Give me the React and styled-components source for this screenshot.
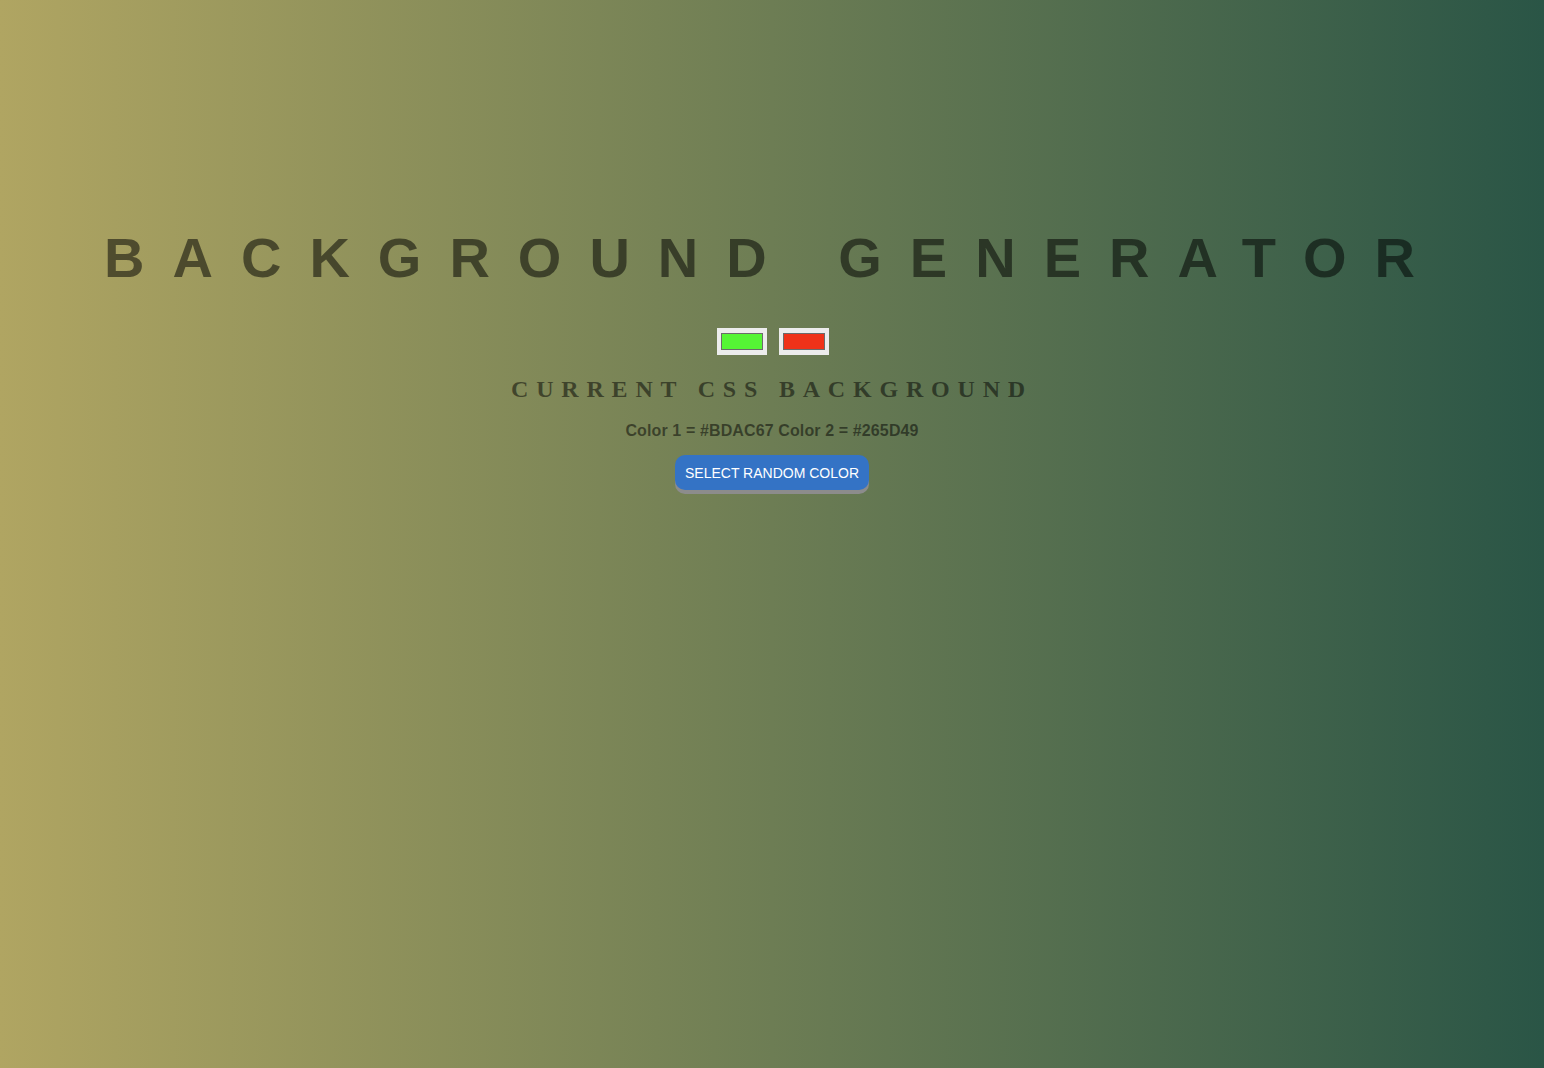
import React, { useState } from "react";
import styled, { createGlobalStyle } from "styled-components";

const GlobalStyle = createGlobalStyle`
  html,
  body {
    margin: 0;
    min-height: 100%;
  }

  body {
    min-height: 100vh;
    background: linear-gradient(to right, #b0a562, #2a5546);
    color: rgba(0, 0, 0, 0.5);
    text-align: center;
  }
`;

const Page = styled.div`
  display: flex;
  flex-direction: column;
  align-items: center;
  padding-top: 226px;
`;

const Title = styled.h1`
  margin: 0;
  padding-left: 3px;
  font: 700 56px/64px "Liberation Sans", Arial, sans-serif;
  letter-spacing: 0.5em;
  text-transform: uppercase;
  color: rgba(0, 0, 0, 0.52);
`;

const Pickers = styled.div`
  display: flex;
  gap: 12px;
  margin-top: 38px;
  padding-left: 2px;
`;

const ColorInput = styled.input`
  width: 50px;
  height: 27px;
  padding: 0;
  border: none;
  border-radius: 0;
  background: #ececec;
  cursor: pointer;

  &::-webkit-color-swatch-wrapper {
    padding: 5px 4px;
  }

  &::-webkit-color-swatch {
    border: 1px solid #6b6b6b;
    border-radius: 0;
  }
`;

const Subtitle = styled.h3`
  margin: 20px 0 0;
  font: 700 24px/28px "Liberation Serif", "Times New Roman", serif;
  letter-spacing: 7.8px;
  text-transform: uppercase;
  color: rgba(0, 0, 0, 0.5);
`;

const Info = styled.p`
  margin: 19px 0 0;
  font: 700 16px/18px "Liberation Sans", Arial, sans-serif;
  letter-spacing: 0.12px;
  color: rgba(0, 0, 0, 0.5);
`;

const RandomButton = styled.button`
  margin-top: 15px;
  padding: 10px 10px 8px;
  border: none;
  border-radius: 10px;
  background: #3473c5;
  box-shadow: 0 4px 0 #8c8c8c;
  color: #fff;
  font: 400 14px/17px "Liberation Sans", Arial, sans-serif;
  text-transform: uppercase;
  cursor: pointer;
`;

export default function App() {
  const [first, setFirst] = useState("#55f535");
  const [second, setSecond] = useState("#ef3219");

  return (
    <Page>
      <GlobalStyle />
      <Title>Background Generator</Title>
      <Pickers>
        <ColorInput
          type="color"
          value={first}
          onChange={e => setFirst(e.target.value)}
        />
        <ColorInput
          type="color"
          value={second}
          onChange={e => setSecond(e.target.value)}
        />
      </Pickers>
      <Subtitle>Current CSS Background</Subtitle>
      <Info>Color 1 = #BDAC67 Color 2 = #265D49</Info>
      <RandomButton>Select Random Color</RandomButton>
    </Page>
  );
}
